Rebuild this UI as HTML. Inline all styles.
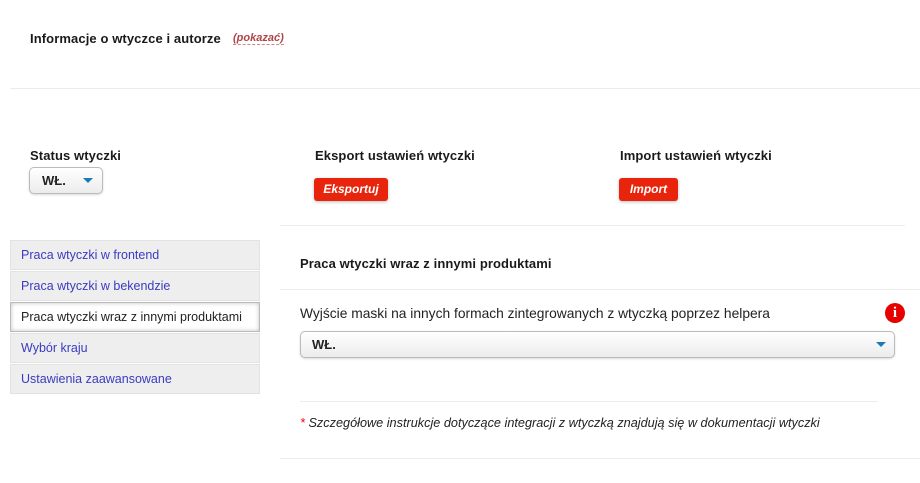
<!DOCTYPE html>
<html><head><meta charset="utf-8"><style>
body{margin:0;width:920px;height:483px;background:#fff;font-family:"Liberation Sans",sans-serif;color:#222;position:relative;overflow:hidden}
.a{position:absolute;white-space:nowrap}
.b{font-weight:bold;font-size:13px;color:#1a1a1a;letter-spacing:0.1px}
.hr{position:absolute;height:1px;background:#ececec}
.btn{position:absolute;background:#e8250c;color:#fff;font-weight:bold;font-style:italic;font-size:12px;border-radius:3px;text-align:center;line-height:23px;height:23px;box-shadow:0 1px 3px rgba(0,0,0,.25)}
.sel{position:absolute;border:1px solid #bbb;border-radius:5px;background:linear-gradient(#fff,#ececec);box-shadow:0 1px 2px rgba(0,0,0,.15);font-weight:bold;font-size:13px}
.tri{position:absolute;width:0;height:0;border-left:5px solid transparent;border-right:5px solid transparent;border-top:5px solid #1a7ab8}
.nav{position:absolute;left:10px;width:250px;height:30px;background:#eee;border:1px solid #e2e2e2;box-sizing:border-box;font-size:12.5px;color:#3b3bc0;line-height:29px;padding-left:10px}
</style></head><body>
<div class="a b" style="left:30px;top:31px">Informacje o wtyczce i autorze</div>
<div class="a" style="left:233px;top:32px;font-size:11px;font-style:italic;font-weight:bold;color:#b0444a;border-bottom:1px dashed #c88">(pokazać)</div>
<div class="hr" style="left:10px;top:88px;width:910px"></div>
<div class="a b" style="left:30px;top:148px">Status wtyczki</div>
<div class="sel" style="left:29px;top:167px;width:72px;height:25px"><span class="a" style="left:12px;top:5px">WŁ.</span><div class="tri" style="left:53px;top:10px"></div></div>
<div class="a b" style="left:315px;top:148px">Eksport ustawień wtyczki</div>
<div class="btn" style="left:314px;top:178px;width:74px">Eksportuj</div>
<div class="a b" style="left:620px;top:148px">Import ustawień wtyczki</div>
<div class="btn" style="left:619px;top:178px;width:59px">Import</div>
<div class="hr" style="left:280px;top:225px;width:625px"></div>
<div class="nav" style="top:240px">Praca wtyczki w frontend</div>
<div class="nav" style="top:271px">Praca wtyczki w bekendzie</div>
<div class="nav" style="top:302px;background:#fff;color:#222;border:1px solid #bbb;box-shadow:inset 0 0 4px rgba(0,0,0,.25)">Praca wtyczki wraz z innymi produktami</div>
<div class="nav" style="top:333px">Wybór kraju</div>
<div class="nav" style="top:364px">Ustawienia zaawansowane</div>
<div class="a b" style="left:300px;top:256px">Praca wtyczki wraz z innymi produktami</div>
<div class="hr" style="left:280px;top:289px;width:640px"></div>
<div class="a" style="left:300px;top:306px;font-size:13.8px">Wyjście maski na innych formach zintegrowanych z wtyczką poprzez helpera</div>
<div class="a" style="left:885px;top:303px;width:20px;height:20px;border-radius:50%;background:#e60000;color:#fff;font-weight:bold;font-size:15px;text-align:center;line-height:20px;font-family:'Liberation Serif',serif">i</div>
<div class="sel" style="left:300px;top:331px;width:593px;height:25px"><span class="a" style="left:11px;top:5px">WŁ.</span><div class="tri" style="left:575px;top:10px"></div></div>
<div class="hr" style="left:300px;top:401px;width:578px"></div>
<div class="a" style="left:300px;top:416px;font-size:12.7px;font-style:italic"><span style="color:#e00">*</span> Szczegółowe instrukcje dotyczące integracji z wtyczką znajdują się w dokumentacji wtyczki</div>
<div class="hr" style="left:280px;top:458px;width:640px"></div>
</body></html>
